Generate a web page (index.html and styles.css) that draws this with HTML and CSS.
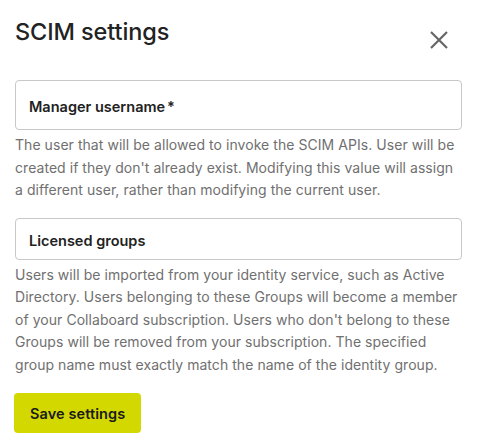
FILE: index.html
```html
<!DOCTYPE html>
<html>
<head>
<meta charset="utf-8">
<link rel="stylesheet" href="styles.css">
</head>
<body>
<div class="dialog">
  <div class="header">
    <h1 class="title">SCIM settings</h1>
    <button class="close" aria-label="Close">
      <svg width="18" height="18" viewBox="0 0 18 18"><path d="M1 1L17 17M17 1L1 17" stroke="#666" stroke-width="2.2" fill="none"/></svg>
    </button>
  </div>
  <div class="field field-first">
    <div class="input"><span class="label">Manager username</span><span class="req">*</span></div>
    <p class="help">The user that will be allowed to invoke the SCIM APIs. User will be created if they don't already exist. Modifying this value will assign a different user, rather than modifying the current user.</p>
  </div>
  <div class="field field-next">
    <div class="input input-sm"><span class="label">Licensed groups</span></div>
    <p class="help">Users will be imported from your identity service, such as Active Directory. Users belonging to these Groups will become a member of your Collaboard subscription. Users who don't belong to these Groups will be removed from your subscription. The specified group name must exactly match the name of the identity group.</p>
  </div>
  <button class="save">Save settings</button>
</div>
</body>
</html>
```
FILE: styles.css
```css
html, body { margin: 0; padding: 0; background: #fff; }
body { font-family: Inter, "Noto Sans", sans-serif; color: #1f1f1f; }
.dialog { padding: 14px 15px 0 15px; width: 447px; }
.header { display: flex; justify-content: space-between; align-items: flex-start; }
.title { margin: 0; font-size: 23.5px; font-weight: 500; line-height: 36px; letter-spacing: -0.1px; color: #222; }
.close { background: none; border: none; padding: 0; margin: 17px 14px 0 0; width: 18px; height: 18px; cursor: pointer; display: block; }
.close svg { display: block; }
.field { display: flex; flex-direction: column; }
.field-first { margin-top: 30px; }
.field-next { margin-top: 16px; }
.input { height: 50px; box-sizing: border-box; border: 1px solid #c8c8c8; border-radius: 4px; padding: 3px 13px 0; display: flex; align-items: center; font-size: 14.5px; font-weight: 600; color: #222; }
.input-sm { height: 42px; }
.req { margin-left: 2px; }
.help { margin: 4px 0 0; font-size: 14px; line-height: 22.5px; color: #707070; letter-spacing: 0.05px; }
.save { margin-top: 17px; margin-left: -1px; background: #d3d800; border: none; border-radius: 4px; height: 40px; padding: 0 16px; font-family: inherit; font-size: 14.5px; font-weight: 600; color: #1a1a1a; letter-spacing: 0.1px; cursor: pointer; }
```
